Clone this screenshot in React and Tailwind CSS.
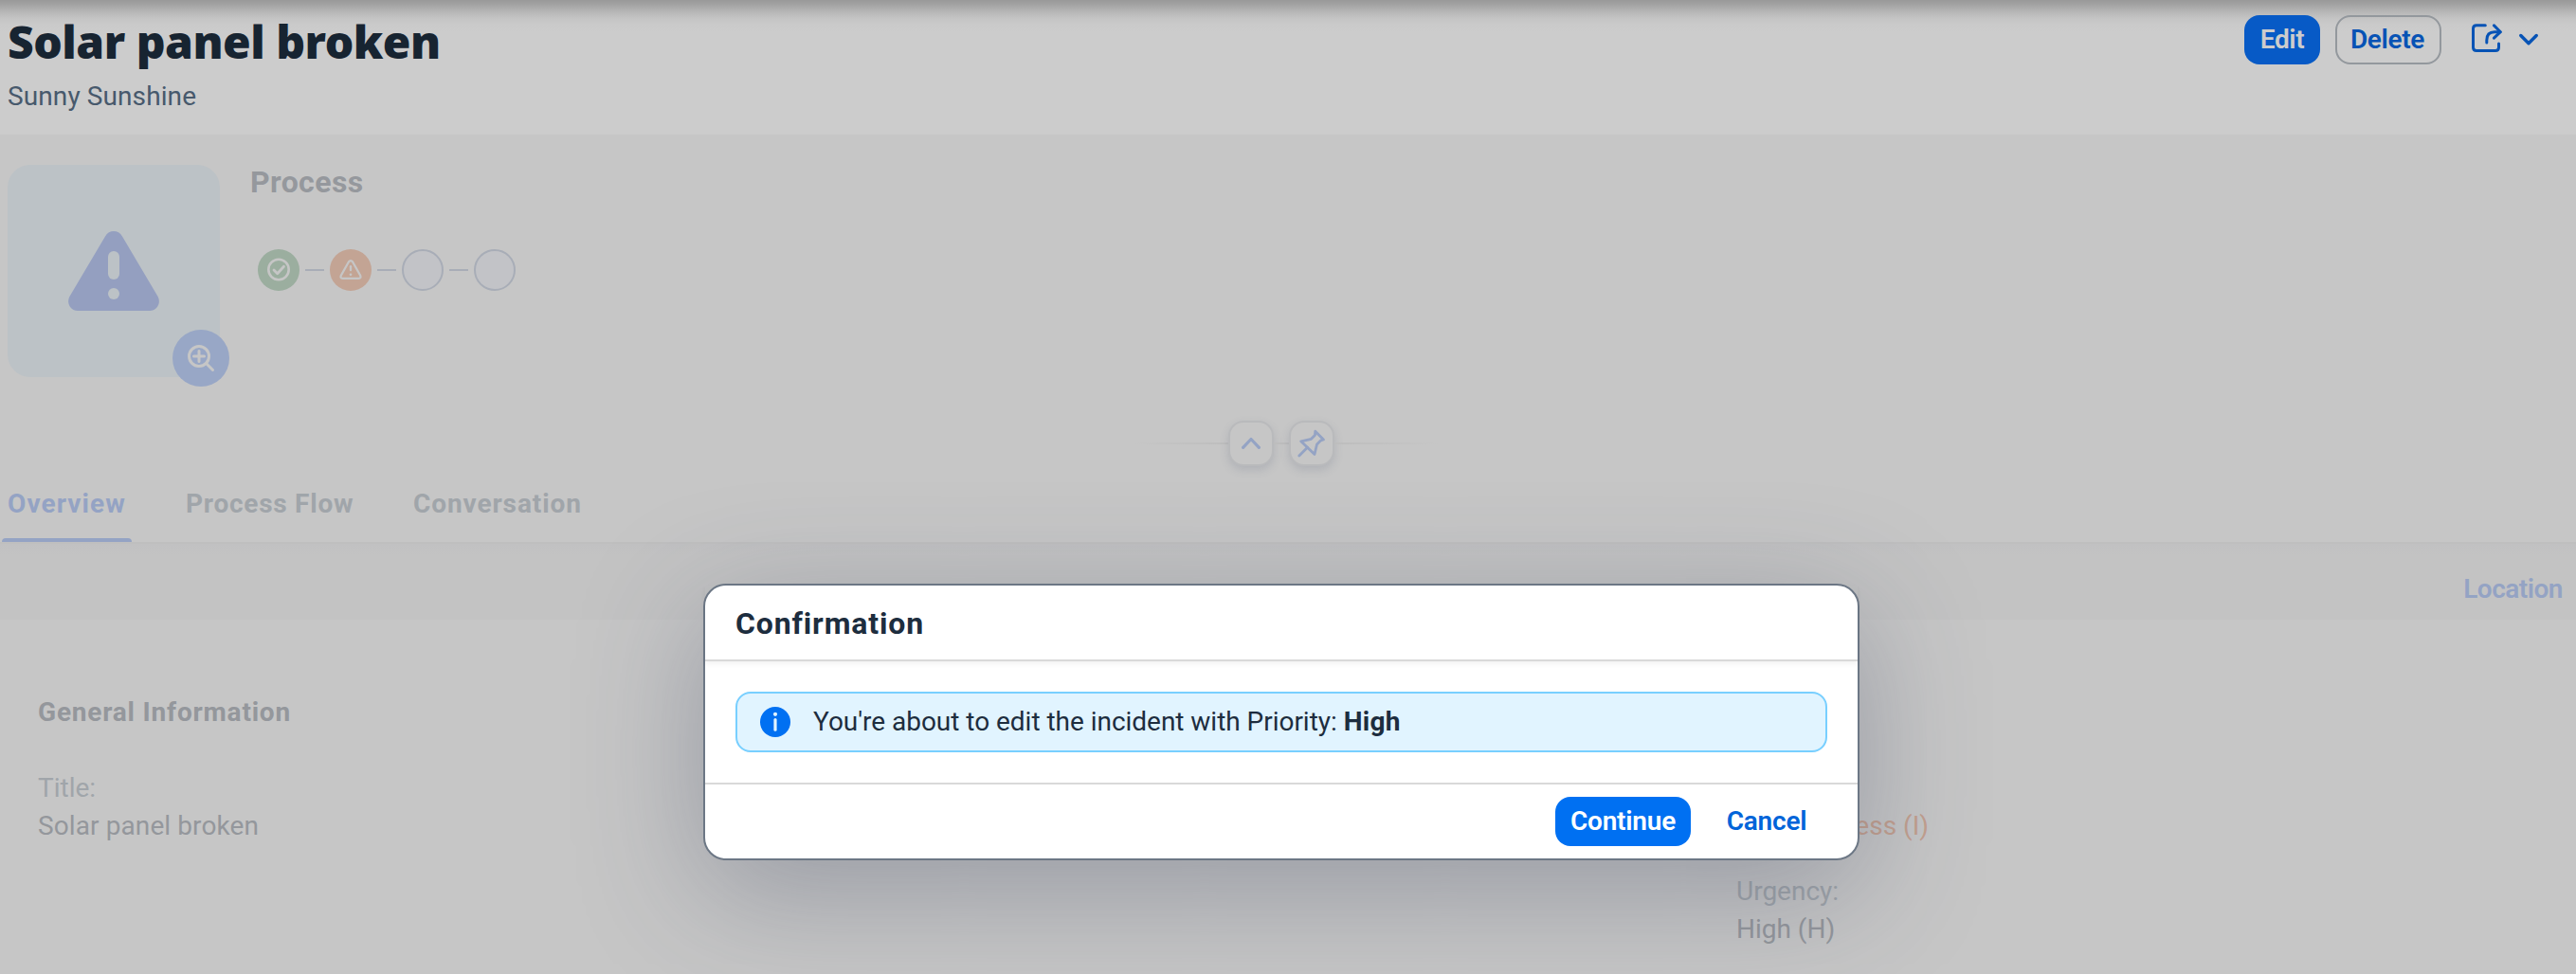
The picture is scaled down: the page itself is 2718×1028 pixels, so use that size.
const InfoIcon = () => (
  <svg className="size-8" viewBox="0 0 32 32">
    <circle cx="16" cy="16" r="16" fill="#0070f2" />
    <circle cx="16" cy="7.8" r="2.1" fill="#e1f4ff" />
    <path d="M16 13.6v10.6" stroke="#e1f4ff" strokeWidth="3.2" strokeLinecap="round" />
  </svg>
);

const AlertTriangle = () => (
  <svg className="w-24 h-[84px]" viewBox="0 0 96 84">
    <path
      d="M39 5.5C43-1.8 53-1.8 57 5.5L94.6 69C98.300 76 93.500 84 86 84H10C2.500 84-2.300 76 1.400 69Z"
      fill="#949fc0"
    />
    <path d="M48 27v18" stroke="#bcc2c6" strokeWidth="12" strokeLinecap="round" />
    <circle cx="48" cy="66" r="6" fill="#bcc2c6" />
  </svg>
);

const ZoomIn = () => (
  <svg className="size-[60px]" viewBox="0 0 60 60" fill="none" stroke="#c6c6c6" strokeWidth="3" strokeLinecap="round">
    <circle cx="28" cy="28" r="10.500" />
    <path d="M28 22.500v11M22.500 28h11M35.800 35.800l6.700 6.700" />
  </svg>
);

const ShareIcon = () => (
  <svg className="w-8 h-[32px]" viewBox="0 0 32 32" fill="none" stroke="#0753b5" strokeWidth="3" strokeLinecap="round" strokeLinejoin="round">
    <path d="M14.300 2.700H5Q1.500 2.700 1.500 6.200V26Q1.500 29.500 5 29.500H25Q28.500 29.500 28.500 26V22" />
    <path d="M15.800 21V18.500Q15.800 9.700 24 9.700H30" />
    <path d="M23.500 2.900l6.800 6.800-6.800 6.500" />
  </svg>
);

const StepLine = () => <div className="mx-1.5 h-0.5 w-5 bg-[#a8adb7]" />;

const Tab = ({ children, className }) => (
  <div className={`h-full pt-5 text-[28px] leading-10 font-bold text-[#a0a5aa] ${className}`}>{children}</div>
);

export default function App() {
  return (
    <div
      className="relative flex h-[1028px] w-[2718px] flex-col overflow-hidden bg-[#c6c6c6] whitespace-nowrap"
      style={{ fontFamily: 'Roboto, "Noto Sans", sans-serif' }}
    >
      <header className="flex h-[142px] justify-between bg-[#ccc] bg-[linear-gradient(to_bottom,#999_0px,#a3a3a3_5px,#b8b8b8_13px,#c5c5c5_20px,#cacaca_26px,#ccc_34px)] pr-10 pl-2">
        <div className="pt-4">
          <h1 className="h-14 font-['Noto_Sans'] text-[48px] leading-[56px] font-black tracking-[-0.5px] text-[#172431]">
            Solar panel broken
          </h1>
          <p className="mt-2.5 text-[28px] leading-10 tracking-[0.1px] text-[#47596c]">Sunny Sunshine</p>
        </div>
        <div className="flex pt-4 text-[28px] font-semibold tracking-[-0.35px]">
          <div className="flex h-[52px] w-20 items-center justify-center rounded-2xl bg-[#075ac6] text-[#ccc]">Edit</div>
          <div className="ml-4 flex h-[52px] w-28 items-center justify-center rounded-2xl border-2 border-[#93989d] pr-0.5 text-[#0753b5]">
            Delete
          </div>
          <div className="mt-2 ml-8">
            <ShareIcon />
          </div>
          <svg className="mt-[18px] ml-[18px] h-4 w-5" viewBox="0 0 20 16" fill="none" stroke="#0753b5" strokeWidth="3.400" strokeLinecap="round" strokeLinejoin="round">
            <path d="M1.800 3.500L10 11.800L18.200 3.500" />
          </svg>
        </div>
      </header>

      <section className="flex h-[288px] pt-8 pl-2">
        <div className="relative flex size-[224px] items-center justify-center rounded-3xl bg-[#bcc2c6]">
          <AlertTriangle />
          <div className="absolute -right-2.5 -bottom-2.5 rounded-full bg-[#98a7c6]">
            <ZoomIn />
          </div>
        </div>
        <div className="ml-8">
          <h2 className="-mt-0.5 text-[32px] leading-10 font-bold tracking-[0.4px] text-[#95989d]">Process</h2>
          <div className="mt-[51px] ml-2 flex items-center">
            <svg className="size-11" viewBox="0 0 44 44" fill="none" stroke="#c6c6c6" strokeLinecap="round" strokeLinejoin="round">
              <circle cx="22" cy="22" r="22" fill="#9bae9f" stroke="none" />
              <circle cx="22" cy="21.500" r="10.700" strokeWidth="2.600" />
              <path d="M17 22l3.700 3.700 6.800-7.500" strokeWidth="2.800" />
            </svg>
            <StepLine />
            <svg className="size-11" viewBox="0 0 44 44" fill="none" stroke="#c6c6c6" strokeLinecap="round" strokeLinejoin="round">
              <circle cx="22" cy="22" r="22" fill="#c3a494" stroke="none" />
              <path d="M20 13.300Q22 10.800 24 13.300L32.200 27.800Q33.300 30.800 30.500 30.800H13.500Q10.700 30.800 11.800 27.800Z" strokeWidth="2.300" />
              <path d="M22 18.200v4" strokeWidth="2.300" />
              <circle cx="22" cy="26.800" r="1.400" fill="#c6c6c6" stroke="none" />
            </svg>
            <StepLine />
            <div className="size-11 rounded-full border-2 border-[#a8adb7] bg-[#c2c3c7]" />
            <StepLine />
            <div className="size-11 rounded-full border-2 border-[#a8adb7] bg-[#c2c3c7]" />
          </div>
        </div>
      </section>

      <div className="mt-3.5 flex h-12 items-center pl-[1196px]">
        <div className="h-0.5 w-[100px] bg-linear-to-r from-[#c6c6c6] to-[#bdbdbd]" />
        <div className="flex size-12 items-center justify-center rounded-2xl border-2 border-[#b9babc] bg-[#c6c6c6] shadow-[0_4px_10px_rgba(90,100,125,0.2)]">
          <svg className="h-4 w-5" viewBox="0 0 20 16" fill="none" stroke="#94a3c4" strokeWidth="3.200" strokeLinecap="round" strokeLinejoin="round">
            <path d="M1.600 12.300L10 3.500L18.400 12.300" />
          </svg>
        </div>
        <div className="h-0.5 w-4 bg-[#bdbdbd]" />
        <div className="flex size-12 items-center justify-center rounded-2xl border-2 border-[#b9babc] bg-[#c6c6c6] shadow-[0_4px_10px_rgba(90,100,125,0.2)]">
          <svg className="h-[30px] w-[30px]" viewBox="0 0 30 30" fill="none" stroke="#94a3c4" strokeWidth="2.800" strokeLinecap="round" strokeLinejoin="round">
            <path d="M18.800 2.200L27.500 11L24.700 11.800L20.500 16L18 26.500L3.700 12.800L14.500 10.300L18.500 6.200Z" />
            <path d="M10.500 19.300L1.800 28" />
          </svg>
        </div>
        <div className="h-0.5 w-[110px] bg-linear-to-r from-[#bdbdbd] to-[#c6c6c6]" />
      </div>

      <nav className="flex h-[82px] border-b-2 border-[#bfbfbf] pl-0.5">
        <div className="flex h-[80px] w-[137px] flex-col justify-between pt-5">
          <div className="pl-1.5 text-[28px] leading-10 font-bold tracking-[1.1px] text-[#94a3c4]">Overview</div>
          <div className="h-1 rounded-t bg-[#94a3c4]" />
        </div>
        <Tab className="ml-[57px] w-[240px] tracking-[0.75px]">Process Flow</Tab>
        <Tab className="tracking-[0.9px]">Conversation</Tab>
      </nav>

      <div className="flex h-20 justify-end bg-[#c3c3c3] bg-linear-to-b from-[#c1c1c2] to-[#c3c3c3] to-15% pt-7 pr-3.5 text-[28px] leading-10 font-semibold tracking-[-0.5px] text-[#94a3c4]">
        <span>Location</span>
      </div>

      <main className="flex grow pl-10 text-[28px] leading-10">
        <div className="w-[1792px] pt-[78px]">
          <h3 className="font-bold tracking-[0.8px] text-[#94979c]">General Information</h3>
          <p className="mt-10 text-[#a0a5aa]">Title:</p>
          <p className="tracking-[0.1px] text-[#94979c]">Solar panel broken</p>
        </div>
        <div className="pt-[198px]">
          <p className="flex h-10 w-[203px] justify-end text-[#c3a08f]">In Process (I)</p>
          <p className="mt-[29px] text-[#a0a5aa]">Urgency:</p>
          <p className="text-[#94979c]">High (H)</p>
        </div>
      </main>

      <div
        role="dialog"
        className="absolute top-[616px] left-[742px] flex h-[292px] w-[1220px] flex-col rounded-3xl border-2 border-[#6c7785] bg-white text-[28px] text-[#1d2d3e] shadow-[0_32px_128px_rgba(60,68,94,0.34)]"
      >
        <div className="h-20 border-b-2 border-[#d9d9d9] pt-5 pl-8 text-[32px] leading-10 font-bold tracking-[0.85px] shadow-[0_3px_5px_rgba(0,0,0,0.05)]">
          Confirmation
        </div>
        <div className="flex h-[130px] border-b-2 border-[#d9d9d9] px-8 pt-8">
          <div className="flex h-16 w-full items-center rounded-2xl border-2 border-[#78cfff] bg-[#e1f4ff] pl-6">
            <InfoIcon />
            <p className="ml-6 tracking-[-0.03px]">
              You're about to edit the incident with Priority: <b className="tracking-[0.3px]">High</b>
            </p>
          </div>
        </div>
        <div className="flex justify-end pt-[13px] pr-9 font-semibold tracking-[-0.2px]">
          <div className="flex h-[52px] w-[143px] items-center justify-center rounded-2xl bg-[#0070f2] text-white">Continue</div>
          <div className="ml-5 flex h-[52px] w-[120px] items-center justify-center text-[#0064d9]">Cancel</div>
        </div>
      </div>
    </div>
  );
}
